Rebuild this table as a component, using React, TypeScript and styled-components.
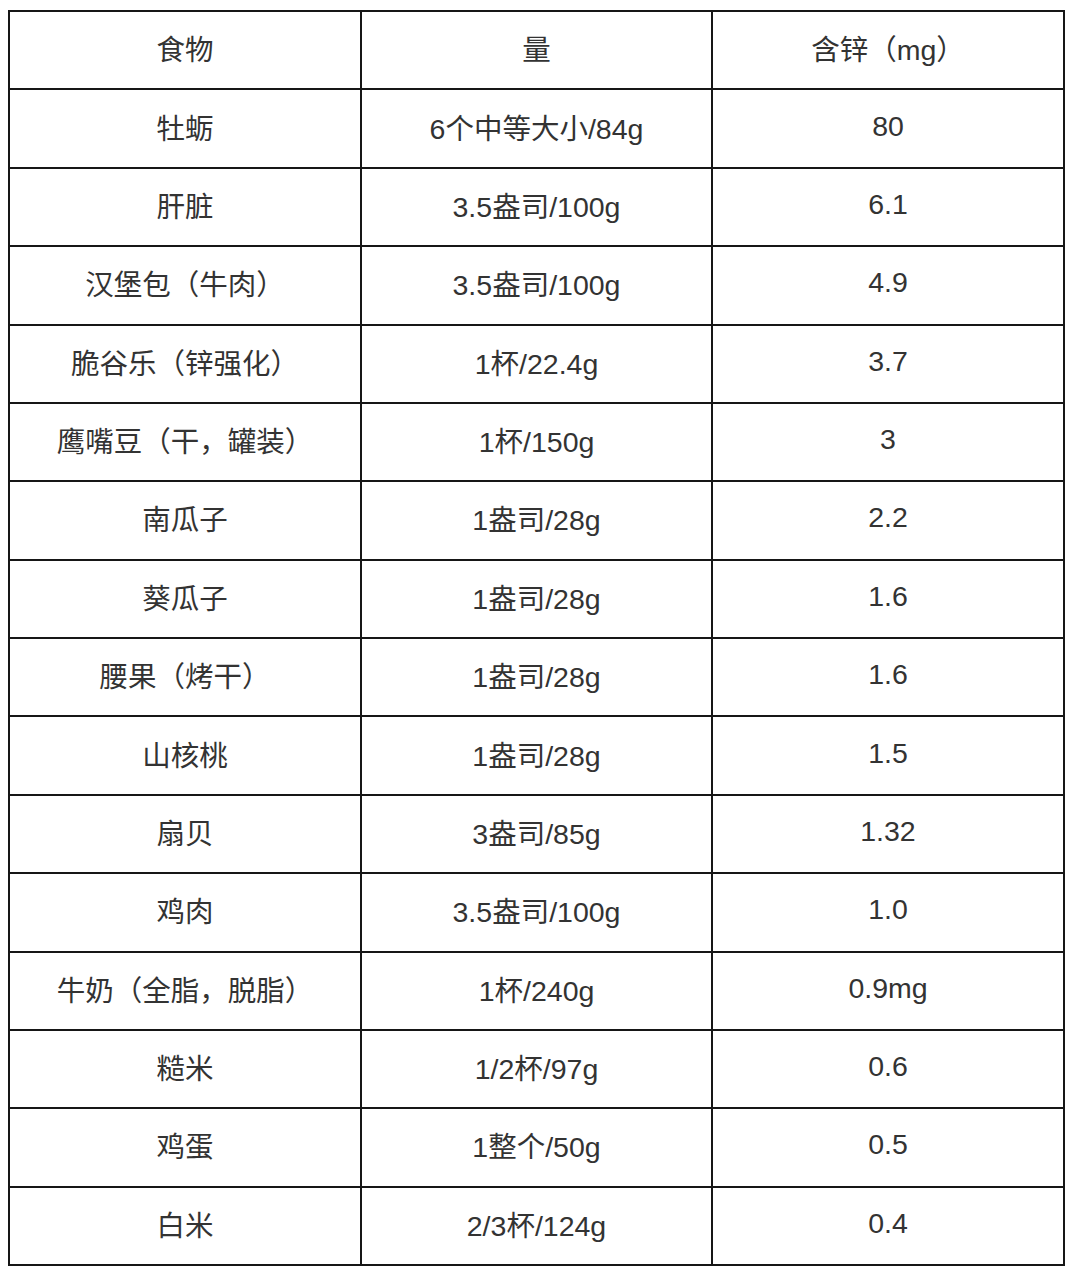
import React from "react";
import styled, { createGlobalStyle } from "styled-components";

const GlobalStyle = createGlobalStyle`
  html, body {
    margin: 0;
    padding: 0;
    background: #fff;
  }
`;

const rows: [string, string, string][] = [
  ["食物", "量", "含锌（mg）"],
  ["牡蛎", "6个中等大小/84g", "80"],
  ["肝脏", "3.5盎司/100g", "6.1"],
  ["汉堡包（牛肉）", "3.5盎司/100g", "4.9"],
  ["脆谷乐（锌强化）", "1杯/22.4g", "3.7"],
  ["鹰嘴豆（干，罐装）", "1杯/150g", "3"],
  ["南瓜子", "1盎司/28g", "2.2"],
  ["葵瓜子", "1盎司/28g", "1.6"],
  ["腰果（烤干）", "1盎司/28g", "1.6"],
  ["山核桃", "1盎司/28g", "1.5"],
  ["扇贝", "3盎司/85g", "1.32"],
  ["鸡肉", "3.5盎司/100g", "1.0"],
  ["牛奶（全脂，脱脂）", "1杯/240g", "0.9mg"],
  ["糙米", "1/2杯/97g", "0.6"],
  ["鸡蛋", "1整个/50g", "0.5"],
  ["白米", "2/3杯/124g", "0.4"],
];

const Page = styled.div`
  padding: 10px 0 0 8px;
  width: 1080px;
  height: 1275px;
  box-sizing: border-box;
`;

const Grid = styled.div`
  display: grid;
  grid-template-columns: 352px 351px 352px;
  grid-auto-rows: 78.375px;
  width: 1057px;
  border-left: 2px solid #161616;
  border-top: 2px solid #161616;
  box-sizing: border-box;
`;

const Cell = styled.div`
  display: flex;
  align-items: center;
  justify-content: center;
  padding-bottom: 5px;
  border-right: 2px solid #161616;
  border-bottom: 2px solid #161616;
  box-sizing: border-box;
  font-family: "Liberation Sans", "Noto Sans CJK SC", sans-serif;
  font-size: 28.5px;
  color: #333;
  white-space: nowrap;
`;

export default function App() {
  return (
    <Page>
      <GlobalStyle />
      <Grid>
        {rows.map((r, i) =>
          r.map((c, j) => <Cell key={`${i}-${j}`}>{c}</Cell>)
        )}
      </Grid>
    </Page>
  );
}
